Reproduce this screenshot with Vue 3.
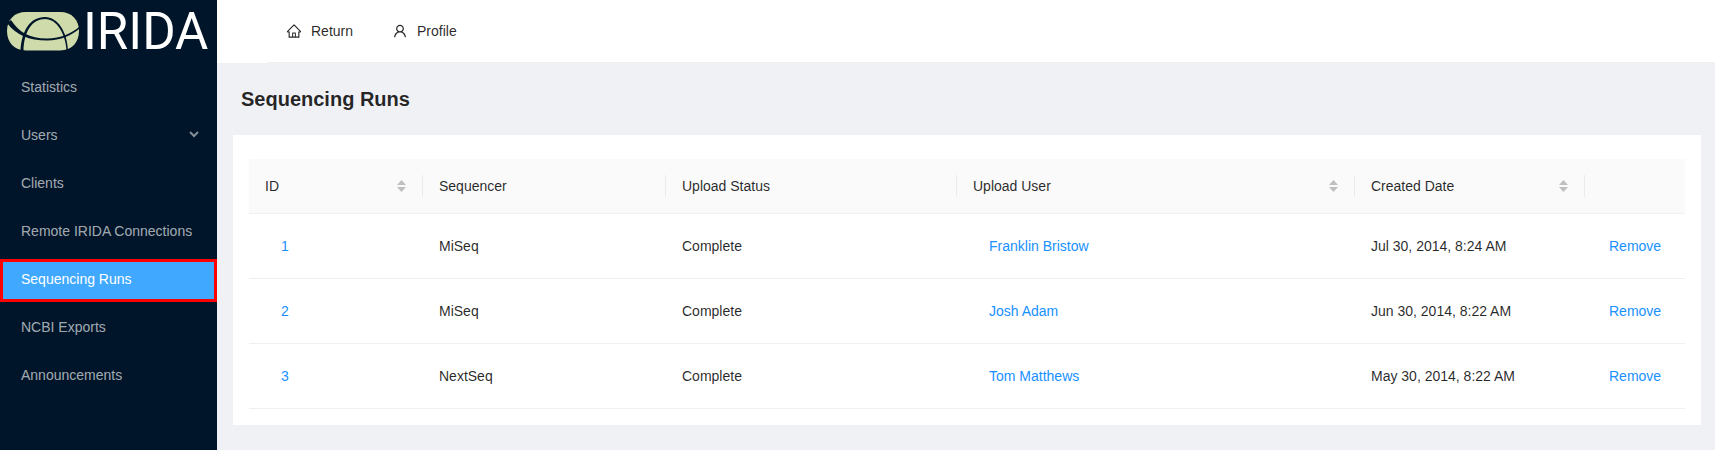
<script setup>
import { ref } from 'vue'

const navItems = ['Statistics', 'Users', 'Clients', 'Remote IRIDA Connections', 'Sequencing Runs', 'NCBI Exports', 'Announcements']
const active = ref('Sequencing Runs')

const columns = [
  { key: 'id', label: 'ID', sortable: true },
  { key: 'sequencer', label: 'Sequencer' },
  { key: 'status', label: 'Upload Status' },
  { key: 'user', label: 'Upload User', sortable: true },
  { key: 'date', label: 'Created Date', sortable: true },
]

const runs = ref([
  { id: 1, sequencer: 'MiSeq', status: 'Complete', user: 'Franklin Bristow', date: 'Jul 30, 2014, 8:24 AM' },
  { id: 2, sequencer: 'MiSeq', status: 'Complete', user: 'Josh Adam', date: 'Jun 30, 2014, 8:22 AM' },
  { id: 3, sequencer: 'NextSeq', status: 'Complete', user: 'Tom Matthews', date: 'May 30, 2014, 8:22 AM' },
])

function remove(id) {
  runs.value = runs.value.filter((run) => run.id !== id)
}
</script>

<template>
  <div class="layout">
    <aside class="sidebar">
      <a class="logo" href="#">
        <svg class="logo-mark" viewBox="0 0 72 39" aria-hidden="true">
          <path class="shape" d="M19 0H53C65 0 72 8 72 19S65 38.500 53 38.500H19C7 38.500 0 30 0 19S7 0 19 0Z" />
          <path class="cut" d="M0 11L4 8C12 20 22 26.500 40 26.500C54 26.500 65 21 72 15V17C65 23 54 28.500 40 28.500C22 28.500 9 23 0 11Z" />
          <path class="cut" d="M13.500 39C14.500 19 23 5 38 5C51 5 60 20 61 38H59.500C58.500 22 50 7 38 7C26 7 17 18 16.500 39Z" />
        </svg>
        <span class="logo-text">IRIDA</span>
      </a>
      <nav class="menu">
        <a
          v-for="item in navItems"
          :key="item"
          href="#"
          class="menu-item"
          :class="{ active: item === active }"
          @click.prevent="active = item"
        >
          <span>{{ item }}</span>
          <svg v-if="item === 'Users'" class="chevron" viewBox="0 0 10 10" aria-hidden="true">
            <path d="M1 2L5 6L9 2" />
          </svg>
        </a>
      </nav>
    </aside>

    <div class="content">
      <header class="topbar">
        <nav class="top-menu">
          <a href="#" class="top-item">
            <svg class="icon" viewBox="0 0 1024 1024" aria-hidden="true">
              <path d="M946.500 505L560.100 118.800l-25.900-25.900a31.500 31.500 0 0 0-44.400 0L77.500 505a63.900 63.900 0 0 0-18.800 46c.4 35.200 29.700 63.300 64.900 63.300h42.500V940h691.800V614.300h43.400c17.100 0 33.200-6.700 45.300-18.800a63.600 63.600 0 0 0 18.700-45.300c0-17-6.700-33.100-18.800-45.200zM568 868H456V664h112v204zm217.900-325.700V868H632V640c0-22.100-17.900-40-40-40H432c-22.100 0-40 17.900-40 40v228H238.100V542.300h-96l370-369.700 23.100 23.100L882 542.300h-96.100z" />
            </svg>
            Return
          </a>
          <a href="#" class="top-item">
            <svg class="icon" viewBox="0 0 1024 1024" aria-hidden="true">
              <path d="M858.500 763.600a374 374 0 0 0-80.600-119.500 375.630 375.630 0 0 0-119.500-80.600c-.4-.2-.8-.3-1.200-.5C719.500 518 760 444.700 760 362c0-137-111-248-248-248S264 225 264 362c0 82.700 40.500 156 102.800 201.100-.4.2-.8.3-1.200.5-44.800 18.900-85 46-119.500 80.600a375.630 375.630 0 0 0-80.600 119.500A371.700 371.700 0 0 0 136 901.800a8 8 0 0 0 8 8.200h60c4.400 0 7.900-3.500 8-7.800 2-77.200 33-149.500 87.800-204.300 56.700-56.700 132-87.900 212.200-87.900s155.500 31.200 212.200 87.900C779 752.700 810 825 812 902.200c.1 4.400 3.600 7.800 8 7.800h60a8 8 0 0 0 8-8.200c-1-47.800-10.900-94.300-29.500-138.200zM512 534c-45.900 0-89.100-17.900-121.600-50.400S340 407.900 340 362c0-45.900 17.900-89.100 50.400-121.600S466.100 190 512 190s89.100 17.900 121.600 50.400S684 316.100 684 362c0 45.900-17.900 89.100-50.400 121.600S557.900 534 512 534z" />
            </svg>
            Profile
          </a>
        </nav>
      </header>

      <main>
        <h1>Sequencing Runs</h1>
        <section class="card">
          <table>
            <colgroup>
              <col class="c-id" />
              <col class="c-sequencer" />
              <col class="c-status" />
              <col class="c-user" />
              <col class="c-date" />
              <col class="c-action" />
            </colgroup>
            <thead>
              <tr>
                <th v-for="col in columns" :key="col.key" scope="col">
                  <button v-if="col.sortable" type="button" class="sorter">
                    {{ col.label }}
                    <svg viewBox="0 0 9 12" aria-hidden="true">
                      <path d="M4.500 0L9 5H0ZM4.500 12L0 7H9Z" />
                    </svg>
                  </button>
                  <template v-else>{{ col.label }}</template>
                </th>
                <td></td>
              </tr>
            </thead>
            <tbody>
              <tr v-for="run in runs" :key="run.id">
                <td><a href="#" class="link">{{ run.id }}</a></td>
                <td>{{ run.sequencer }}</td>
                <td>{{ run.status }}</td>
                <td><a href="#" class="link">{{ run.user }}</a></td>
                <td>{{ run.date }}</td>
                <td class="action"><button type="button" class="link" @click="remove(run.id)">Remove</button></td>
              </tr>
            </tbody>
          </table>
        </section>
      </main>
    </div>
  </div>
</template>

<style>
body {
  margin: 0;
}
</style>

<style scoped>
.layout {
  display: flex;
  min-height: 100vh;
  background: #f0f1f5;
  color: rgba(0, 0, 0, 0.85);
  font: 14px/22px "Liberation Sans", Arial, sans-serif;
}

a {
  color: inherit;
  text-decoration: none;
}

button {
  border: 0;
  background: none;
  color: inherit;
  font: inherit;
  cursor: pointer;
}

.sidebar {
  flex: none;
  width: 217px;
  background: #001529;
}

.logo {
  display: flex;
  align-items: center;
  gap: 4px;
  height: 63px;
  padding-left: 7px;
  color: #fff;
}

.logo-mark {
  flex: none;
  width: 72px;
  height: 39px;
}

.shape {
  fill: #cfdbab;
}

.cut {
  fill: #001529;
}

.logo-text {
  font: 51px/62px Roboto, sans-serif;
}

.menu {
  display: flex;
  flex-direction: column;
  gap: 8px;
  padding-top: 4px;
}

.menu-item {
  display: flex;
  align-items: center;
  justify-content: space-between;
  height: 40px;
  padding: 0 18px 0 21px;
  color: rgba(255, 255, 255, 0.65);
}

.menu-item.active {
  height: 43px;
  margin-bottom: -3px;
  box-sizing: border-box;
  padding-bottom: 3px;
  background: #40a9ff;
  box-shadow: inset 0 0 0 3px #f00;
  color: #fff;
}

.chevron {
  width: 10px;
  height: 10px;
  fill: none;
  stroke: currentColor;
  stroke-width: 2;
  opacity: 0.8;
}

.content {
  flex: 1;
  min-width: 0;
}

.topbar {
  padding-left: 50px;
  background: #fff;
}

.top-menu {
  display: flex;
  border-bottom: 1px solid #f0f0f0;
}

.top-item {
  display: flex;
  align-items: center;
  gap: 9px;
  padding: 20px 20px 20px 19px;
}

.icon {
  width: 16px;
  height: 16px;
  fill: currentColor;
}

main {
  padding: 20px 14px 16px 16px;
}

h1 {
  margin: 0 0 20px;
  padding-left: 8px;
  font-size: 20px;
  line-height: 32px;
}

.card {
  padding: 24px 16px 16px;
  background: #fff;
}

table {
  width: 100%;
  table-layout: fixed;
  border-collapse: separate;
  border-spacing: 0;
}

.c-id { width: 174px; }
.c-sequencer { width: 243px; }
.c-status { width: 291px; }
.c-user { width: 398px; }
.c-date { width: 230px; }
.c-action { width: 100px; }

th,
td {
  padding: 16px;
  border-bottom: 1px solid #f0f0f0;
  text-align: left;
  font-weight: 400;
}

thead td {
  background: #fafafa;
}

thead th {
  background: linear-gradient(#ebebeb, #ebebeb) right center / 1px 22px no-repeat #fafafa;
}

.sorter {
  display: flex;
  align-items: center;
  justify-content: space-between;
  width: 100%;
  padding: 0 1px 0 0;
}

.sorter svg {
  width: 9px;
  height: 12px;
  fill: #bfbfbf;
}

.link {
  display: inline-block;
  padding: 5px 16px;
  color: #1890ff;
}

.action {
  padding-inline: 8px;
  text-align: center;
}
</style>
